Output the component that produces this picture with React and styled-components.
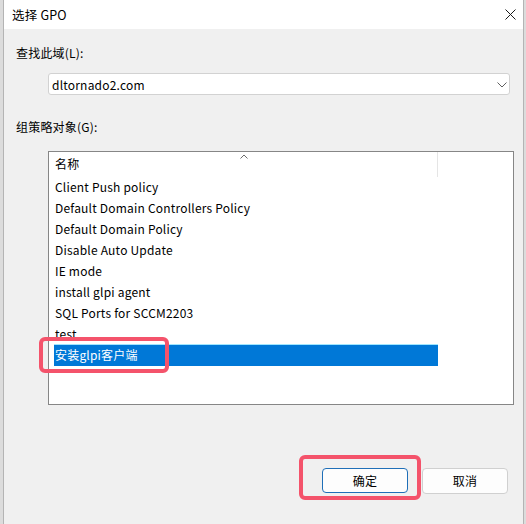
import React from 'react';
import styled, { createGlobalStyle } from 'styled-components';

const GlobalStyle = createGlobalStyle`
  html, body {
    margin: 0;
    padding: 0;
    background: #f0f0f0;
  }
  body {
    font-family: "Noto Sans CJK SC", "Noto Sans", sans-serif;
    font-size: 12px;
    letter-spacing: 0.2px;
    color: #000;
  }
`;

const Screen = styled.div`
  display: flex;
  width: 526px;
  height: 524px;
  overflow: hidden;
`;

const BackStrip = styled.div`
  width: ${props => props.w}px;
  flex: none;
  background: #dcdcdc;
  border-${props => props.side}: 1px solid #b4b4b4;
`;

const Dialog = styled.div`
  flex: 1;
  display: flex;
  flex-direction: column;
  background: #f0f0f0;
`;

const TitleBar = styled.div`
  height: 29px;
  flex: none;
  background: #fff;
  display: flex;
  align-items: center;
  justify-content: space-between;
  padding: 0 7px 0 8px;
`;

const Title = styled.span`
  font-size: 12.5px;
  line-height: 18px;
`;

const Body = styled.div`
  flex: 1;
  display: flex;
  flex-direction: column;
  padding: 0 9px 0 12px;
`;

const Label = styled.div`
  line-height: 18px;
  margin-top: ${props => props.top}px;
`;

const Combo = styled.div`
  margin: 11px 0 0 32px;
  width: 462px;
  height: 22px;
  box-sizing: border-box;
  background: #fff;
  border: 1px solid #d2d2d2;
  border-radius: 3px;
  display: flex;
  align-items: center;
  justify-content: space-between;
  padding: 1px 2px 0 3px;
`;

const ListBox = styled.div`
  margin: 15px 0 0 32px;
  width: 466px;
  height: 254px;
  box-sizing: border-box;
  background: #fff;
  border: 1px solid #868686;
  display: flex;
  flex-direction: column;
`;

const Header = styled.div`
  position: relative;
  width: 389px;
  height: 25px;
  flex: none;
  box-sizing: border-box;
  border-right: 1px solid #e5e5e5;
  display: flex;
  align-items: center;
  padding: 0 0 3px 6px;
`;

const SortMark = styled.svg`
  position: absolute;
  top: 2px;
  left: 191px;
`;

const Row = styled.div`
  position: relative;
  height: 21px;
  width: 384px;
  margin-left: 5px;
  display: flex;
  align-items: center;
  padding: 0 0 2px 1px;
  box-sizing: border-box;
  white-space: nowrap;
  background: ${props => (props.selected ? '#0078d7' : 'transparent')};
  color: ${props => (props.selected ? '#fff' : '#000')};
  box-shadow: ${props => (props.selected ? '0 -1px 0 #9fe6ff' : 'none')};
`;

const Callout = styled.div`
  position: absolute;
  left: ${props => props.x}px;
  top: ${props => props.y}px;
  width: ${props => props.w}px;
  height: ${props => props.h}px;
  box-sizing: border-box;
  border: 4px solid #f4536b;
  border-radius: 6px;
  pointer-events: none;
`;

const Footer = styled.div`
  margin-top: 63px;
  display: flex;
  justify-content: flex-end;
  align-items: flex-start;
  gap: 14px;
  padding-right: 6px;
`;

const Button = styled.div`
  position: relative;
  width: 86px;
  height: ${props => (props.primary ? 25 : 26)}px;
  box-sizing: border-box;
  background: #fdfdfd;
  border: 1px solid ${props => (props.primary ? '#1f6fb8' : '#d0d0d0')};
  border-radius: 4px;
  display: flex;
  align-items: center;
  justify-content: center;
  padding-bottom: 1px;
`;

const items = [
  'Client Push policy',
  'Default Domain Controllers Policy',
  'Default Domain Policy',
  'Disable Auto Update',
  'IE mode',
  'install glpi agent',
  'SQL Ports for SCCM2203',
  'test',
  '安装glpi客户端',
];

function CloseIcon() {
  return (
    <svg width="11" height="11" viewBox="0 0 11 11">
      <path d="M0.5 0.5 L10.5 10.5 M10.5 0.5 L0.5 10.5" stroke="#1a1a1a" strokeWidth="1" fill="none" />
    </svg>
  );
}

function Chevron() {
  return (
    <svg width="10" height="6" viewBox="0 0 10 6">
      <path d="M0.5 0.5 L5 5 L9.5 0.5" stroke="#606060" strokeWidth="1" fill="none" />
    </svg>
  );
}

export default function App() {
  return (
    <Screen>
      <GlobalStyle />
      <BackStrip w={3} side="right" />
      <Dialog>
        <TitleBar>
          <Title>选择 GPO</Title>
          <CloseIcon />
        </TitleBar>
        <Body>
          <Label top={15}>查找此域(L):</Label>
          <Combo>
            <span>dltornado2.com</span>
            <Chevron />
          </Combo>
          <Label top={23}>组策略对象(G):</Label>
          <ListBox>
            <Header>
              名称
              <SortMark width="8" height="5" viewBox="0 0 8 5">
                <path d="M0.5 4.5 L4 1 L7.5 4.5" stroke="#6b6b6b" strokeWidth="1" fill="none" />
              </SortMark>
            </Header>
            {items.map((name, i) => {
              const selected = i === items.length - 1;
              return (
                <Row key={name} selected={selected}>
                  {name}
                  {selected && <Callout x={-15} y={-8} w={130} h={36} />}
                </Row>
              );
            })}
          </ListBox>
          <Footer>
            <Button primary>
              确定
              <Callout x={-24} y={-14} w={122} h={45} />
            </Button>
            <Button>取消</Button>
          </Footer>
        </Body>
      </Dialog>
      <BackStrip w={4} side="left" />
    </Screen>
  );
}
